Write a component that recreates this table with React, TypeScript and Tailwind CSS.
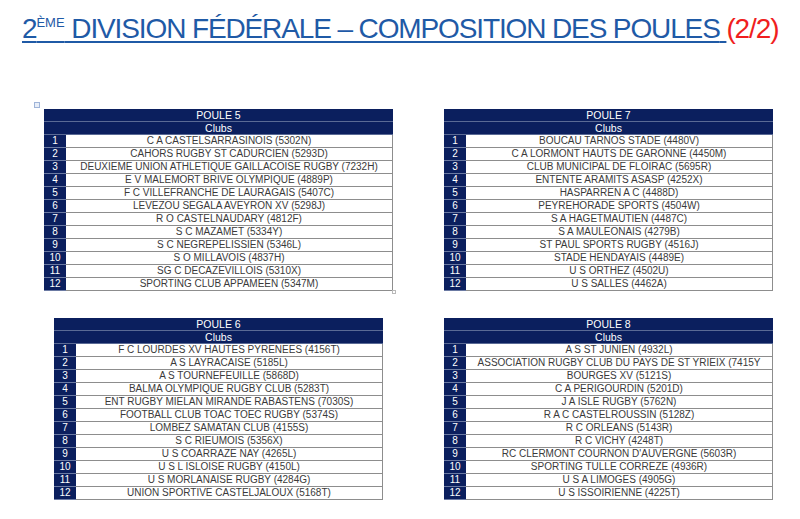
const poules = [
  {
    name: "POULE 5",
    clubs: [
      "C A CASTELSARRASINOIS (5302N)",
      "CAHORS RUGBY ST CADURCIEN (5293D)",
      "DEUXIEME UNION ATHLETIQUE GAILLACOISE RUGBY (7232H)",
      "E V MALEMORT BRIVE OLYMPIQUE (4889P)",
      "F C VILLEFRANCHE DE LAURAGAIS (5407C)",
      "LEVEZOU SEGALA AVEYRON XV (5298J)",
      "R O CASTELNAUDARY (4812F)",
      "S C MAZAMET (5334Y)",
      "S C NEGREPELISSIEN (5346L)",
      "S O MILLAVOIS (4837H)",
      "SG C DECAZEVILLOIS (5310X)",
      "SPORTING CLUB APPAMEEN (5347M)",
    ],
  },
  {
    name: "POULE 7",
    clubs: [
      "BOUCAU TARNOS STADE (4480V)",
      "C A LORMONT HAUTS DE GARONNE (4450M)",
      "CLUB MUNICIPAL DE FLOIRAC (5695R)",
      "ENTENTE ARAMITS ASASP (4252X)",
      "HASPARREN A C (4488D)",
      "PEYREHORADE SPORTS (4504W)",
      "S A HAGETMAUTIEN (4487C)",
      "S A MAULEONAIS (4279B)",
      "ST PAUL SPORTS RUGBY (4516J)",
      "STADE HENDAYAIS (4489E)",
      "U S ORTHEZ (4502U)",
      "U S SALLES (4462A)",
    ],
  },
  {
    name: "POULE 6",
    clubs: [
      "F C LOURDES XV HAUTES PYRENEES (4156T)",
      "A S LAYRACAISE (5185L)",
      "A S TOURNEFEUILLE (5868D)",
      "BALMA OLYMPIQUE RUGBY CLUB (5283T)",
      "ENT RUGBY MIELAN MIRANDE RABASTENS (7030S)",
      "FOOTBALL CLUB TOAC TOEC RUGBY (5374S)",
      "LOMBEZ SAMATAN CLUB (4155S)",
      "S C RIEUMOIS (5356X)",
      "U S COARRAZE NAY (4265L)",
      "U S L ISLOISE RUGBY (4150L)",
      "U S MORLANAISE RUGBY (4284G)",
      "UNION SPORTIVE CASTELJALOUX (5168T)",
    ],
  },
  {
    name: "POULE 8",
    clubs: [
      "A S ST JUNIEN (4932L)",
      "ASSOCIATION RUGBY CLUB DU PAYS DE ST YRIEIX (7415Y",
      "BOURGES XV (5121S)",
      "C A PERIGOURDIN (5201D)",
      "J A ISLE RUGBY (5762N)",
      "R A C CASTELROUSSIN (5128Z)",
      "R C ORLEANS (5143R)",
      "R C VICHY (4248T)",
      "RC CLERMONT COURNON D'AUVERGNE (5603R)",
      "SPORTING TULLE CORREZE (4936R)",
      "U S A LIMOGES (4905G)",
      "U S ISSOIRIENNE (4225T)",
    ],
  },
]

function PouleTable({ poule, className, handles }: { poule: (typeof poules)[number]; className: string; handles?: boolean }) {
  return (
    <div className={`relative ${className}`}>
      {handles && (
        <>
          <div className="absolute -left-[10px] -top-[7px] h-[6px] w-[6px] border border-[#9fb4d8] bg-[#e8eef8]" />
          <div className="absolute -right-[3px] -bottom-[3px] h-[4px] w-[4px] border border-[#b9b9b9] bg-white" />
        </>
      )}
      <div className="flex h-[13px] items-center justify-center border-b border-[#5a6a95] bg-[#0b1f5e] text-[10.5px] leading-none text-white">
        {poule.name}
      </div>
      <div className="flex h-[13px] items-center justify-center border-b border-[#5a6a95] bg-[#0b1f5e] text-[10.5px] leading-none text-white">
        Clubs
      </div>
      {poule.clubs.map((club, i) => (
        <div key={club} className="flex h-[13px]">
          <div className="flex w-[22px] shrink-0 items-center justify-center border-b border-[#6b7aa3] bg-[#0b1f5e] text-[10px] leading-none text-white">
            {i + 1}
          </div>
          <div className="flex flex-1 items-center justify-center whitespace-nowrap border-b border-r border-[#8d8d8d] bg-white text-[10px] leading-none text-[#3a3a3a]">
            {club}
          </div>
        </div>
      ))}
    </div>
  )
}

export default function App() {
  return (
    <div className="h-[519px] w-[800px] overflow-hidden bg-white" style={{ fontFamily: '"Liberation Sans", Arial, sans-serif' }}>
      <h1 className="whitespace-nowrap pl-[22px] pt-[14px] text-[28px] font-normal leading-[30px] tracking-[-0.04em]">
        <span className="text-[#1f5aa6] underline decoration-[1.5px] underline-offset-[3px]">
          2<span className="relative -top-[11px] text-[13px] leading-none tracking-normal">ÈME</span> DIVISION FÉDÉRALE – COMPOSITION DES POULES{" "}
        </span>
        <span className="text-[#f01e1e]">(2/2)</span>
      </h1>

      <div className="mt-[65px] flex">
        <PouleTable poule={poules[0]} className="ml-[44px] w-[349px]" handles />
        <PouleTable poule={poules[1]} className="ml-[51px] w-[329px]" />
      </div>

      <div className="mt-[27px] flex">
        <PouleTable poule={poules[2]} className="ml-[54px] w-[329px]" />
        <PouleTable poule={poules[3]} className="ml-[61px] w-[329px]" />
      </div>
    </div>
  )
}
